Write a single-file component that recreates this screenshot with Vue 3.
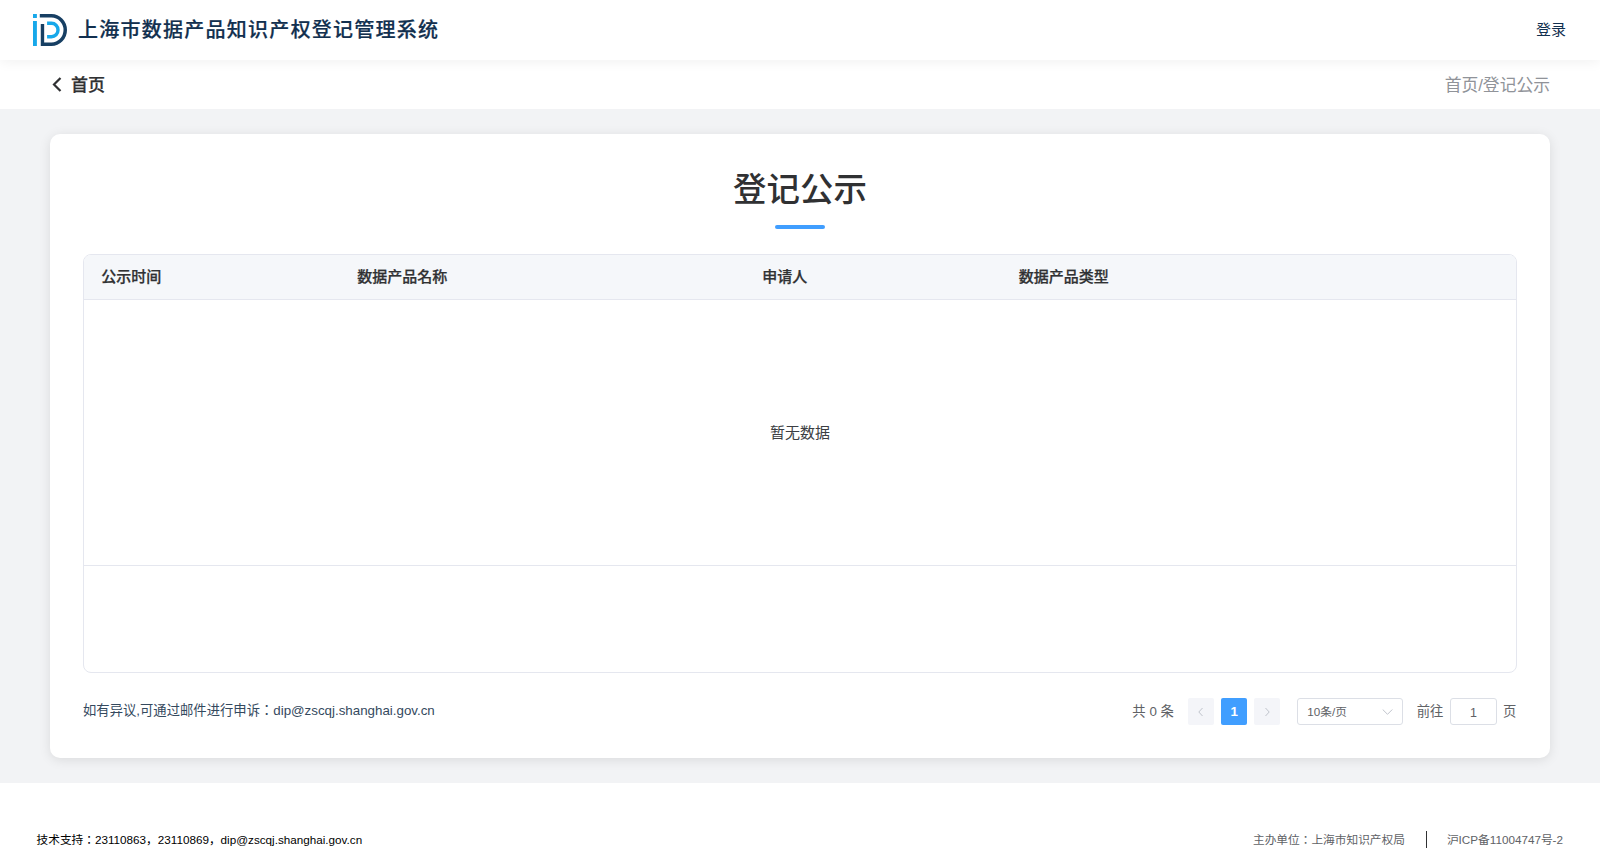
<template>
  <div class="page">
    <header class="topbar">
      <div class="brand">
        <svg class="logo" width="34" height="32" viewBox="0 0 35 32" preserveAspectRatio="none">
          <rect x="0" y="0" width="4" height="4" fill="#17a8ea" />
          <rect x="0" y="7" width="4" height="25" fill="#17a8ea" />
          <path d="M7 0h12a16 16 0 0 1 0 32H8V10h3.500v18.400H19a12.400 12.400 0 0 0 0-24.800H7z" fill="#173f63" />
          <path d="M14.500 7.500H19a8.500 8.500 0 0 1 0 17h-4.500V21H19a5 5 0 0 0 0-10h-4.500z" fill="#17a8ea" />
        </svg>
        <span class="brand-name">上海市数据产品知识产权登记管理系统</span>
      </div>
      <a class="login">登录</a>
    </header>

    <div class="subbar">
      <div class="back">
        <svg width="10" height="15" viewBox="0 0 10 15">
          <path d="M8.500 1 2 7.500 8.500 14" fill="none" stroke="#303133" stroke-width="2.200" />
        </svg>
        <span>首页</span>
      </div>
      <div class="crumb">首页/登记公示</div>
    </div>

    <main class="content">
      <section class="card">
        <h1 class="title">登记公示</h1>
        <div class="title-line"></div>

        <div class="table">
          <div class="thead">
            <div v-for="col in columns" :key="col.label" class="th" :style="{ width: col.width }">
              {{ col.label }}
            </div>
          </div>
          <div class="empty">暂无数据</div>
          <div class="table-rest"></div>
        </div>

        <div class="card-foot">
          <div class="notice">如有异议,可通过邮件进行申诉：dip@zscqj.shanghai.gov.cn</div>
          <div class="pager">
            <span class="total">共 0 条</span>
            <button class="page-btn">
              <svg width="8" height="10" viewBox="0 0 8 10"><path d="M5.500 1 1.800 5l3.700 4" fill="none" stroke="#c0c4cc" /></svg>
            </button>
            <button class="page-btn active">1</button>
            <button class="page-btn">
              <svg width="8" height="10" viewBox="0 0 8 10"><path d="M2.500 1 6.200 5 2.500 9" fill="none" stroke="#c0c4cc" /></svg>
            </button>
            <div class="size-select">
              <span>10条/页</span>
              <svg width="11" height="6" viewBox="0 0 11 6"><path d="M.7.500 5.500 5.300 10.300.5" fill="none" stroke="#c0c4cc" /></svg>
            </div>
            <span class="goto">前往</span>
            <div class="goto-input">1</div>
            <span class="goto-end">页</span>
          </div>
        </div>
      </section>
    </main>

    <footer class="footer">
      <div class="support">技术支持：23110863，23110869，dip@zscqj.shanghai.gov.cn</div>
      <div class="org">
        <span class="org-text">主办单位：上海市知识产权局</span>
        <i class="divider"></i>
        <span class="org-text">沪ICP备11004747号-2</span>
      </div>
    </footer>
  </div>
</template>

<script setup>
const columns = [
  { label: "公示时间", width: "256px" },
  { label: "数据产品名称", width: "405px" },
  { label: "申请人", width: "256.5px" },
  { label: "数据产品类型", width: "auto" },
];
</script>

<style>
html,
body {
  margin: 0;
  background: #fff;
}
</style>

<style scoped>
.page {
  width: 1600px;
  height: 861px;
  overflow: hidden;
  display: flex;
  flex-direction: column;
  font-family: "Liberation Sans", "Noto Sans CJK JP", sans-serif;
  color: #303133;
}

.topbar {
  height: 60px;
  flex: none;
  display: flex;
  align-items: center;
  justify-content: space-between;
  padding: 0 34px 0 33px;
  background: #fff;
  box-shadow: 0 2px 12px rgba(0, 0, 0, 0.06);
  position: relative;
  z-index: 1;
}

.brand {
  display: flex;
  align-items: center;
  gap: 11px;
}

.logo {
  display: block;
}

.brand-name {
  padding-bottom: 3px;
  font-size: 20px;
  font-weight: 500;
  letter-spacing: 1.25px;
  color: #12304f;
  -webkit-text-stroke: 0.2px #12304f;
}

.login {
  padding-bottom: 4px;
  font-size: 15px;
  color: #12304f;
}

.subbar {
  height: 49px;
  flex: none;
  display: flex;
  align-items: center;
  justify-content: space-between;
  padding: 0 50px 0 52px;
  background: #fff;
}

.back {
  display: flex;
  align-items: center;
  gap: 9px;
  font-size: 17px;
  font-weight: 500;
  color: #303133;
  -webkit-text-stroke: 0.25px #303133;
}

.back span,
.crumb {
  padding-bottom: 2px;
}

.crumb {
  font-size: 16.8px;
  color: #909399;
}

.content {
  height: 674px;
  flex: none;
  box-sizing: border-box;
  padding: 25px 50px;
  background: #f2f3f5;
}

.card {
  height: 100%;
  box-sizing: border-box;
  padding: 33px 33px 0;
  background: #fff;
  border-radius: 10px;
  box-shadow: 0 2px 12px rgba(0, 0, 0, 0.1);
}

.title {
  margin: 0;
  height: 44px;
  line-height: 46px;
  text-align: center;
  font-size: 33.5px;
  font-weight: 500;
  color: #303133;
}

.title-line {
  width: 50px;
  height: 4px;
  margin: 14px auto 25px;
  border-radius: 2px;
  background: #409eff;
}

.table {
  height: 419px;
  box-sizing: border-box;
  border: 1px solid #e5e7ef;
  border-radius: 8px;
  overflow: hidden;
  display: flex;
  flex-direction: column;
}

.thead {
  height: 45px;
  flex: none;
  display: flex;
  align-items: center;
  background: #f5f7fa;
  border-bottom: 1px solid #e5e7ef;
  box-sizing: border-box;
}

.th {
  box-sizing: border-box;
  padding: 0 0 4px 17.3px;
  font-size: 15px;
  font-weight: 500;
  color: #303133;
  -webkit-text-stroke: 0.25px #303133;
}

.empty {
  height: 266px;
  flex: none;
  box-sizing: border-box;
  padding-bottom: 2px;
  display: flex;
  align-items: center;
  justify-content: center;
  font-size: 15px;
  color: #3c3e43;
  border-bottom: 1px solid #e5e7ef;
}

.table-rest {
  flex: 1;
}

.card-foot {
  height: 77px;
  display: flex;
  align-items: center;
  justify-content: space-between;
}

.notice {
  padding-bottom: 4px;
  font-size: 13.33px;
  color: #34495e;
}

.pager {
  display: flex;
  align-items: center;
  font-size: 13.33px;
  color: #606266;
}

.total {
  padding-bottom: 3px;
  margin-right: 14px;
}

.page-btn {
  width: 26.5px;
  height: 27px;
  padding: 0;
  margin-right: 6.5px;
  border: 0;
  border-radius: 2px;
  background: #f4f5f9;
  display: flex;
  align-items: center;
  justify-content: center;
  font-family: inherit;
  font-size: 13.33px;
  font-weight: 700;
}

.page-btn.active {
  background: #409eff;
  color: #fff;
}

.size-select {
  width: 106px;
  height: 27px;
  box-sizing: border-box;
  margin: 0 13.33px 0 10.5px;
  padding: 0 9px 2px 9px;
  border: 1px solid #dcdfe6;
  border-radius: 3px;
  display: flex;
  align-items: center;
  justify-content: space-between;
  font-size: 11.67px;
}

.size-select svg {
  margin-top: 2px;
}

.goto,
.goto-end {
  padding-bottom: 3px;
}

.goto {
  margin-right: 6.67px;
}

.goto-input {
  width: 47px;
  height: 27px;
  box-sizing: border-box;
  padding-top: 2px;
  border: 1px solid #dcdfe6;
  border-radius: 3px;
  display: flex;
  align-items: center;
  justify-content: center;
  font-size: 12.5px;
}

.goto-end {
  margin: 0 0.7px 0 6px;
}

.footer {
  flex: 1;
  display: flex;
  align-items: center;
  justify-content: space-between;
  padding: 35px 37px 0 36.5px;
  background: #fff;
  font-size: 11.7px;
}

.support {
  padding-bottom: 3px;
  color: #000;
}

.org {
  display: flex;
  align-items: center;
  color: #606266;
}

.org-text {
  padding-bottom: 3px;
}

.divider {
  width: 1px;
  height: 17px;
  margin: 0 20px 0 21px;
  background: #303133;
}
</style>
